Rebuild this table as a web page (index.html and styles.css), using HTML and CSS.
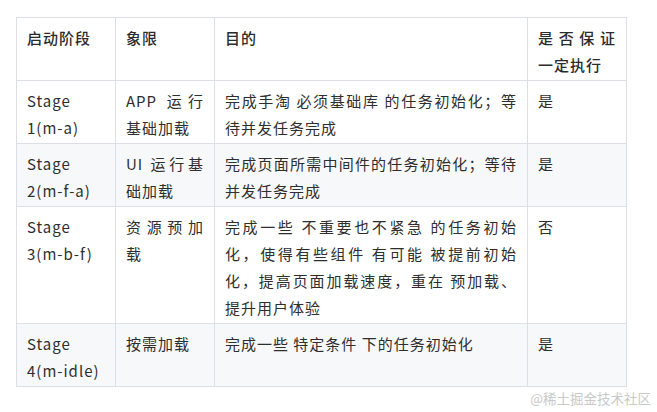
FILE: index.html
```html
<!DOCTYPE html>
<html lang="zh-CN">
<head>
<meta charset="utf-8">
<link rel="stylesheet" href="styles.css">
</head>
<body>
<div class="page">
  <table class="stages">
    <colgroup>
      <col class="c-stage">
      <col class="c-quad">
      <col class="c-goal">
      <col class="c-must">
    </colgroup>
    <thead>
      <tr>
        <th>启动阶段</th>
        <th>象限</th>
        <th>目的</th>
        <th><span class="jl">是否保证</span>一定执行</th>
      </tr>
    </thead>
    <tbody>
      <tr>
        <td>Stage<br>1(m-a)</td>
        <td><span class="jl">APP 运行</span>基础加载</td>
        <td><span class="jl">完成手淘 必须基础库 的任务初始化；等</span>待并发任务完成</td>
        <td>是</td>
      </tr>
      <tr class="alt">
        <td>Stage<br>2(m-f-a)</td>
        <td><span class="jl">UI 运行基</span>础加载</td>
        <td><span class="jl">完成页面所需中间件的任务初始化；等待</span>并发任务完成</td>
        <td>是</td>
      </tr>
      <tr>
        <td>Stage<br>3(m-b-f)</td>
        <td><span class="jl">资源预加</span>载</td>
        <td><span class="jl">完成一些 不重要也不紧急 的任务初始</span><span class="jl">化，使得有些组件 有可能 被提前初始</span><span class="jl">化，提高页面加载速度，重在 预加载、</span>提升用户体验</td>
        <td>否</td>
      </tr>
      <tr class="alt">
        <td>Stage<br>4(m-idle)</td>
        <td>按需加载</td>
        <td>完成一些 特定条件 下的任务初始化</td>
        <td>是</td>
      </tr>
    </tbody>
  </table>
  <div class="watermark">@稀土掘金技术社区</div>
</div>
</body>
</html>
```

FILE: styles.css
```css
html, body {
  margin: 0;
  padding: 0;
  background: #ffffff;
}

.page {
  position: relative;
  width: 657px;
  height: 412px;
  padding: 17px 0 0 16px;
  box-sizing: border-box;
  font-family: "Noto Sans CJK SC", "Noto Sans", sans-serif;
  color: #2e2e2e;
}

.stages {
  border-collapse: collapse;
  table-layout: fixed;
  width: 610px;
  font-size: 15px;
  letter-spacing: 1px;
  line-height: 27px;
}

.c-stage { width: 99px; }
.c-quad { width: 99px; }
.c-goal { width: 313px; }
.c-must { width: 99px; }

.stages th,
.stages td {
  border: 1px solid #dcdfe3;
  padding: 6px 10px 2px 10px;
  vertical-align: top;
  text-align: justify;
  height: 54px;
}

.stages th {
  font-weight: 500;
  color: #2b2b2b;
}

.stages tr.alt td {
  background: #f7f8fa;
}

.jl {
  display: block;
  text-align: justify;
  text-align-last: justify;
}

.watermark {
  position: absolute;
  right: 6px;
  top: 389px;
  font-size: 13.5px;
  line-height: 18px;
  color: #c9c9c9;
  white-space: nowrap;
}
```
